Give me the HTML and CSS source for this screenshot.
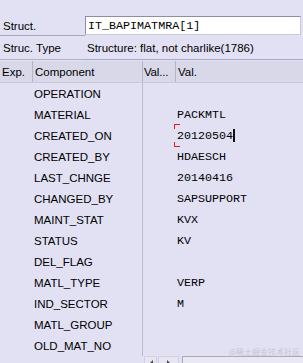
FILE: index.html
```html
<!DOCTYPE html>
<html>
<head>
<meta charset="utf-8">
<link rel="stylesheet" href="styles.css">
</head>
<body>
<div class="screen">
  <div class="form-row struct-row">
    <div class="label lined">Struct.</div>
    <div class="input">IT_BAPIMATMRA[1]</div>
  </div>
  <div class="form-row type-row">
    <div class="label grey-line">Struc. Type</div>
    <div class="type-value">Structure: flat, not charlike(1786)</div>
  </div>
  <div class="table">
    <div class="head">
      <div class="hcell">Exp.</div>
      <div class="hcell">Component</div>
      <div class="hcell tight">Val...</div>
      <div class="hcell last">Val.</div>
    </div>
    <div class="body">
      <div class="row"><div></div><div class="comp">OPERATION</div><div class="vv"></div><div class="val"></div></div>
      <div class="row"><div></div><div class="comp">MATERIAL</div><div class="vv"></div><div class="val">PACKMTL</div></div>
      <div class="row"><div></div><div class="comp">CREATED_ON</div><div class="vv"></div><div class="val focus">20120504<span class="caret"></span><span class="mark top"></span><span class="mark bottom"></span></div></div>
      <div class="row"><div></div><div class="comp">CREATED_BY</div><div class="vv"></div><div class="val">HDAESCH</div></div>
      <div class="row"><div></div><div class="comp">LAST_CHNGE</div><div class="vv"></div><div class="val">20140416</div></div>
      <div class="row"><div></div><div class="comp">CHANGED_BY</div><div class="vv"></div><div class="val">SAPSUPPORT</div></div>
      <div class="row"><div></div><div class="comp">MAINT_STAT</div><div class="vv"></div><div class="val">KVX</div></div>
      <div class="row"><div></div><div class="comp">STATUS</div><div class="vv"></div><div class="val">KV</div></div>
      <div class="row"><div></div><div class="comp">DEL_FLAG</div><div class="vv"></div><div class="val"></div></div>
      <div class="row"><div></div><div class="comp">MATL_TYPE</div><div class="vv"></div><div class="val">VERP</div></div>
      <div class="row"><div></div><div class="comp">IND_SECTOR</div><div class="vv"></div><div class="val">M</div></div>
      <div class="row"><div></div><div class="comp">MATL_GROUP</div><div class="vv"></div><div class="val"></div></div>
      <div class="row"><div></div><div class="comp">OLD_MAT_NO</div><div class="vv"></div><div class="val"></div></div>
    </div>
    <div class="scroll">
      <div class="sbtn"><svg width="6" height="8" viewBox="0 0 6 8"><path d="M5 0 L1 4 L5 8 Z" fill="#444"/></svg></div>
      <div class="sbtn wide"><svg width="6" height="8" viewBox="0 0 6 8"><path d="M1 0 L5 4 L1 8 Z" fill="#444"/></svg></div>
      <div class="track"></div>
    </div>
  </div>
  <div class="watermark">@稀土掘金技术社区</div>
</div>
</body>
</html>
```
FILE: styles.css
```css
html, body {
  margin: 0;
  padding: 0;
  background: #e2e1f4;
}
.screen {
  position: relative;
  width: 303px;
  height: 363px;
  overflow: hidden;
  font-family: "Liberation Sans", Arial, sans-serif;
  font-size: 11.5px;
  color: #000;
  padding-top: 16px;
  box-sizing: border-box;
}
.form-row {
  display: grid;
  grid-template-columns: 85px 1fr;
}
.struct-row {
  height: 21px;
}
.label {
  padding-left: 3px;
  display: flex;
  align-items: center;
}
.lined {
  height: 19px;
  border-bottom: 1px solid #a8a7ba;
}
.input {
  height: 19px;
  margin-right: 2px;
  background: #fff;
  border: 1px solid #8e8da8;
  border-right-color: #c9c8dc;
  border-bottom-color: #c9c8dc;
  box-sizing: border-box;
  font-family: "Liberation Mono", "Courier New", monospace;
  font-size: 11.7px;
  padding-left: 2px;
  display: flex;
  align-items: center;
}
.type-row {
  height: 22px;
  border-bottom: 1px solid #a9a7d2;
}
.grey-line {
  border-bottom: 1px solid #b3b2c2;
  margin-bottom: -1px;
}
.type-value {
  display: flex;
  align-items: center;
  padding-left: 2px;
}
.table {
  display: flex;
  flex-direction: column;
}
.head, .row {
  display: grid;
  grid-template-columns: 33px 110px 33px 1fr;
}
.head {
  height: 22px;
  background: #d9d8e8;
  border-bottom: 1px solid #c9c8da;
  box-sizing: border-box;
  margin-top: 1px;
}
.hcell {
  border-right: 1px solid #b5b3c8;
  display: flex;
  align-items: center;
  padding-left: 2px;
  white-space: nowrap;
  overflow: hidden;
}
.hcell.tight {
  padding-left: 1px;
  letter-spacing: -0.2px;
}
.hcell.last {
  border-right: none;
}
.body {
  height: 273px;
  display: flex;
  flex-direction: column;
}
.row {
  height: 21px;
  flex: none;
}
.comp {
  display: flex;
  align-items: center;
  padding-left: 1px;
  border-right: 1px solid #b9b8cc;
  white-space: nowrap;
}
.val {
  grid-column: 4;
  display: flex;
  align-items: center;
  padding-left: 1px;
  font-family: "Liberation Mono", "Courier New", monospace;
  font-size: 11.7px;
  position: relative;
}
.caret {
  display: inline-block;
  width: 2px;
  height: 13px;
  background: #111;
}
.mark {
  position: absolute;
  left: -2px;
  width: 5px;
  height: 4px;
  border-left: 1px solid #e0201a;
}
.mark.top {
  top: -1px;
  border-top: 1px solid #e0201a;
}
.mark.bottom {
  bottom: -1px;
  border-bottom: 1px solid #e0201a;
}
.scroll {
  display: flex;
  height: 16px;
  margin-left: 144px;
  gap: 1px;
}
.sbtn {
  width: 13px;
  height: 16px;
  background: #e6e5f1;
  border: 1px solid #d2d1e2;
  box-sizing: border-box;
  display: flex;
  justify-content: center;
  padding-top: 3px;
}
.sbtn.wide {
  width: 21px;
}
.track {
  flex: 1;
  margin-left: 2px;
  background: #e9e8f3;
  border: 1px solid #a9a8c0;
  border-right: none;
  box-sizing: border-box;
}
.watermark {
  position: absolute;
  right: 3px;
  bottom: 6px;
  font-family: "Noto Sans CJK SC", sans-serif;
  font-size: 8px;
  color: #c6c5d6;
}
```
